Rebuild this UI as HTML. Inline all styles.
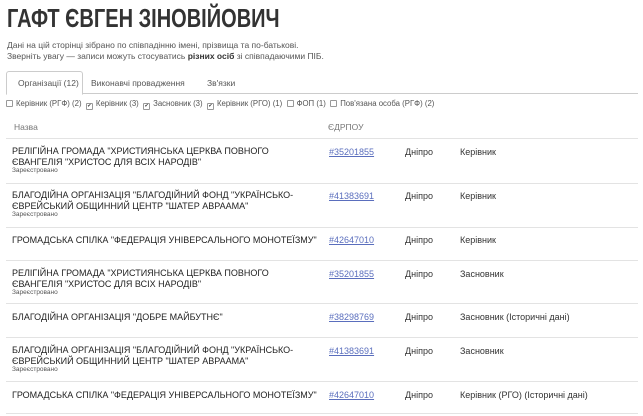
<!DOCTYPE html>
<html><head><meta charset="utf-8"><style>
body{margin:0;background:#fff;font-family:"Liberation Sans",Arial,sans-serif;color:#333;width:643px;height:416px;overflow:hidden;position:relative}
.a{position:absolute;white-space:nowrap}
h1{position:absolute;left:7px;top:3px;margin:0;font-size:26px;font-weight:bold;color:#333;transform:scaleX(0.77);transform-origin:left top;white-space:nowrap}
.p{font-size:8.5px;color:#555}
.tab{font-size:8.5px;color:#555}
.line{position:absolute;left:6px;width:632px;height:1px;background:#e3e3e3}
.nm{font-size:9px;color:#222;line-height:11px}
.st{font-size:6.5px;color:#555}
.ln{font-size:9px;color:#5a6ebd;text-decoration:underline}
.c{font-size:9px;color:#333}
.cb{display:inline-block;width:5px;height:5px;border:1px solid #999;border-radius:1px;vertical-align:-1px;margin-right:3px;font-size:5px;line-height:5px;text-align:center;color:#333}
</style></head><body>
<h1>ГАФТ ЄВГЕН ЗІНОВІЙОВИЧ</h1>
<div class="a p" style="left:7px;top:40px">Дані на цій сторінці зібрано по співпадінню імені, прізвища та по-батькові.</div>
<div class="a p" style="left:7px;top:51px">Зверніть увагу — записи можуть стосуватись <b style="color:#333">різних осіб</b> зі співпадаючими ПІБ.</div>
<div class="a" style="left:6px;top:71px;width:75px;height:22px;border:1px solid #ccc;border-bottom:1px solid #fff;border-radius:3px 3px 0 0;background:#fff;z-index:2"></div>
<div class="a" style="left:6px;top:93px;width:632px;height:1px;background:#ccc"></div>
<div class="a tab" style="left:18px;top:78px;z-index:3">Організації (12)</div>
<div class="a tab" style="left:91px;top:78px">Виконавчі провадження</div>
<div class="a tab" style="left:207px;top:78px">Зв'язки</div>
<div class="a p" style="left:6px;top:99px;font-size:7.8px">
<span class="cb"></span>Керівник (РГФ) (2) &nbsp;<span class="cb">✔</span>Керівник (3) &nbsp;<span class="cb">✔</span>Засновник (3) &nbsp;<span class="cb">✔</span>Керівник (РГО) (1) &nbsp;<span class="cb"></span>ФОП (1) &nbsp;<span class="cb"></span>Пов'язана особа (РГФ) (2)</div>
<div class="a p" style="left:14px;top:122px;color:#777">Назва</div>
<div class="a p" style="left:328px;top:122px;color:#777">ЄДРПОУ</div>

<div class="line" style="top:138px"></div>
<div class="a nm" style="left:12px;top:146px">РЕЛІГІЙНА ГРОМАДА "ХРИСТИЯНСЬКА ЦЕРКВА ПОВНОГО<br>ЄВАНГЕЛІЯ "ХРИСТОС ДЛЯ ВСІХ НАРОДІВ"</div>
<div class="a st" style="left:12px;top:167px">Зареєстровано</div>
<div class="a ln" style="left:329px;top:147px">#35201855</div><div class="a c" style="left:405px;top:147px">Дніпро</div><div class="a c" style="left:460px;top:147px">Керівник</div>

<div class="line" style="top:183px"></div>
<div class="a nm" style="left:12px;top:190px">БЛАГОДІЙНА ОРГАНІЗАЦІЯ "БЛАГОДІЙНИЙ ФОНД "УКРАЇНСЬКО-<br>ЄВРЕЙСЬКИЙ ОБЩИННИЙ ЦЕНТР "ШАТЕР АВРААМА"</div>
<div class="a st" style="left:12px;top:211px">Зареєстровано</div>
<div class="a ln" style="left:329px;top:191px">#41383691</div><div class="a c" style="left:405px;top:191px">Дніпро</div><div class="a c" style="left:460px;top:191px">Керівник</div>

<div class="line" style="top:227px"></div>
<div class="a nm" style="left:12px;top:235px">ГРОМАДСЬКА СПІЛКА "ФЕДЕРАЦІЯ УНІВЕРСАЛЬНОГО МОНОТЕЇЗМУ"</div>
<div class="a ln" style="left:329px;top:235px">#42647010</div><div class="a c" style="left:405px;top:235px">Дніпро</div><div class="a c" style="left:460px;top:235px">Керівник</div>

<div class="line" style="top:260px"></div>
<div class="a nm" style="left:12px;top:268px">РЕЛІГІЙНА ГРОМАДА "ХРИСТИЯНСЬКА ЦЕРКВА ПОВНОГО<br>ЄВАНГЕЛІЯ "ХРИСТОС ДЛЯ ВСІХ НАРОДІВ"</div>
<div class="a st" style="left:12px;top:289px">Зареєстровано</div>
<div class="a ln" style="left:329px;top:269px">#35201855</div><div class="a c" style="left:405px;top:269px">Дніпро</div><div class="a c" style="left:460px;top:269px">Засновник</div>

<div class="line" style="top:303px"></div>
<div class="a nm" style="left:12px;top:312px">БЛАГОДІЙНА ОРГАНІЗАЦІЯ "ДОБРЕ МАЙБУТНЄ"</div>
<div class="a ln" style="left:329px;top:312px">#38298769</div><div class="a c" style="left:405px;top:312px">Дніпро</div><div class="a c" style="left:460px;top:312px">Засновник (Історичні дані)</div>

<div class="line" style="top:337px"></div>
<div class="a nm" style="left:12px;top:345px">БЛАГОДІЙНА ОРГАНІЗАЦІЯ "БЛАГОДІЙНИЙ ФОНД "УКРАЇНСЬКО-<br>ЄВРЕЙСЬКИЙ ОБЩИННИЙ ЦЕНТР "ШАТЕР АВРААМА"</div>
<div class="a st" style="left:12px;top:366px">Зареєстровано</div>
<div class="a ln" style="left:329px;top:346px">#41383691</div><div class="a c" style="left:405px;top:346px">Дніпро</div><div class="a c" style="left:460px;top:346px">Засновник</div>

<div class="line" style="top:381px"></div>
<div class="a nm" style="left:12px;top:390px">ГРОМАДСЬКА СПІЛКА "ФЕДЕРАЦІЯ УНІВЕРСАЛЬНОГО МОНОТЕЇЗМУ"</div>
<div class="a ln" style="left:329px;top:390px">#42647010</div><div class="a c" style="left:405px;top:390px">Дніпро</div><div class="a c" style="left:460px;top:390px">Керівник (РГО) (Історичні дані)</div>
<div class="line" style="top:413px"></div>
</body></html>
